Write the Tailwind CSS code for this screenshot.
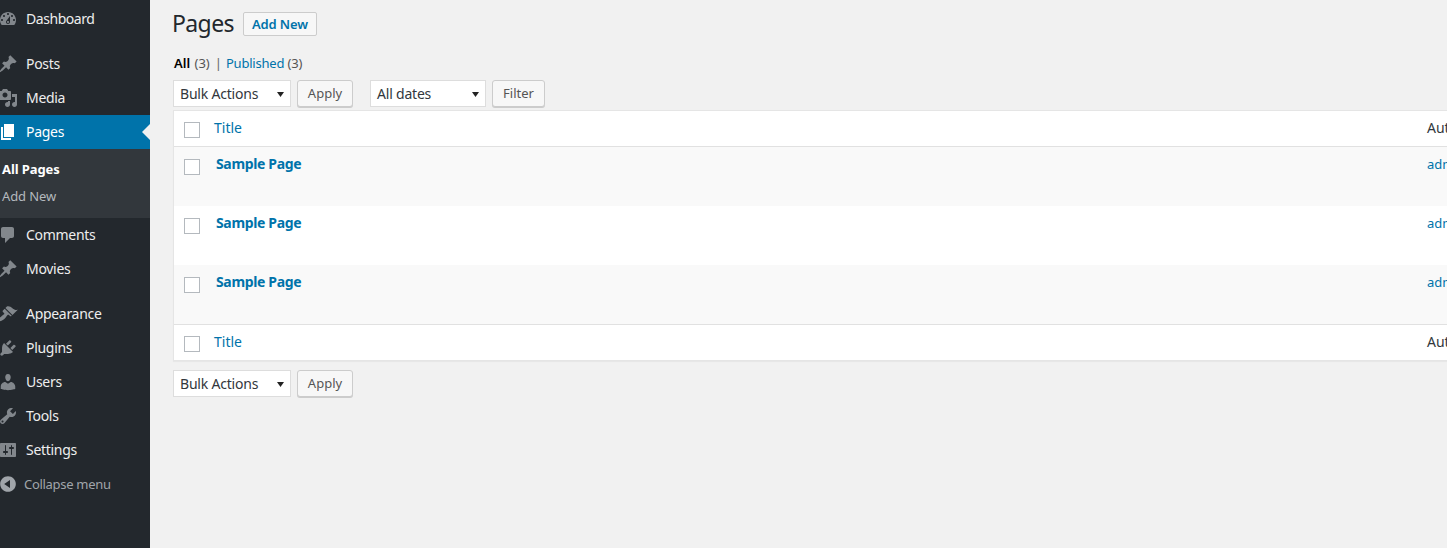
<!DOCTYPE html>
<html lang="en">
<head>
  <meta charset="UTF-8"/>
  <title>Pages</title>
  <script src="https://cdn.jsdelivr.net/npm/@tailwindcss/browser@4"></script>
</head>
<body class="h-[548px] w-[1447px] overflow-hidden bg-[#f1f1f1] font-['Noto_Sans',sans-serif] text-[14px] text-[#444]">
<div class="flex h-full">
  <!-- Admin menu -->
  <aside class="h-full w-[150px] shrink-0 bg-[#23282d] pt-[2px] tracking-[-0.3px] text-[#eee]">
    <a class="flex h-[34px] items-center gap-[8px]"><svg class="-ml-[2px] size-5 fill-[#82878c]" viewBox="0 0 20 20"><path d="M3.76 16h12.48c1.1-1.37 1.76-3.11 1.76-5 0-4.42-3.58-8-8-8s-8 3.58-8 8c0 1.89.66 3.63 1.76 5zM10 4c.55 0 1 .45 1 1s-.45 1-1 1-1-.45-1-1 .45-1 1-1zM6 6c.55 0 1 .45 1 1s-.45 1-1 1-1-.45-1-1 .45-1 1-1zm8 0c.55 0 1 .45 1 1s-.45 1-1 1-1-.45-1-1 .45-1 1-1zm-5.37 5.55L12 7v6c0 1.1-.9 2-2 2s-2-.9-2-2c0-.57.24-1.08.63-1.45zM4 10c.55 0 1 .45 1 1s-.45 1-1 1-1-.45-1-1 .45-1 1-1zm12 0c.55 0 1 .45 1 1s-.45 1-1 1-1-.45-1-1 .45-1 1-1zm-5 3c0-.55-.45-1-1-1s-1 .45-1 1 .45 1 1 1 1-.45 1-1z"/></svg><span class="-mt-[2px] tracking-[-0.45px]">Dashboard</span></a>
    <a class="mt-[11px] flex h-[34px] items-center gap-[8px]"><svg class="-ml-[2px] size-5 fill-[#82878c]" viewBox="0 0 20 20"><path d="M10.44 3.02l1.82-1.82 6.36 6.35-1.83 1.82c-1.05-.68-2.48-.57-3.41.36l-.75.75c-.92.93-1.04 2.35-.35 3.41l-1.83 1.82-2.41-2.41-2.8 2.79c-.42.42-3.38 2.71-3.8 2.29s1.86-3.39 2.28-3.81l2.79-2.79L4.1 9.36l1.83-1.82c1.05.69 2.48.57 3.4-.36l.75-.75c.93-.92 1.05-2.35.36-3.41z"/></svg><span class="-mt-[2px]">Posts</span></a>
    <a class="flex h-[34px] items-center gap-[8px]"><svg class="-ml-[2px] size-5 fill-[#82878c]" viewBox="0 0 20 20"><path d="M13 11V4c0-.55-.45-1-1-1h-1.67L9 1H5L3.67 3H2c-.55 0-1 .45-1 1v7c0 .55.45 1 1 1h10c.55 0 1-.45 1-1zM7 4.5c1.38 0 2.5 1.12 2.5 2.5S8.38 9.5 7 9.5 4.5 8.38 4.5 7 5.62 4.5 7 4.5zM14 6h5v10.5c0 1.38-1.12 2.5-2.5 2.5S14 17.88 14 16.5s1.12-2.5 2.5-2.5c.17 0 .34.02.5.05V9h-3V6zm-4 8.05V13h2v3.5c0 1.38-1.12 2.5-2.5 2.5S7 17.88 7 16.5 8.12 14 9.5 14c.17 0 .34.02.5.05z"/></svg><span class="-mt-[2px]">Media</span></a>
    <a class="relative flex h-[34px] items-center gap-[8px] bg-[#0073aa] text-white"><svg class="-ml-[2px] size-5 fill-white" viewBox="0 0 20 20"><path d="M6 15V2h10v13H6zm-1 1h8v2H3V5h2v11z"/></svg><span class="-mt-[2px]">Pages</span><span class="absolute right-0 top-[9px] border-y-[8px] border-r-[8px] border-y-transparent border-r-[#f1f1f1]"></span></a>
    <div class="h-[69px] bg-[#32373c] pt-[7px] text-[13px] tracking-[-0.1px]">
      <a class="flex h-[27px] items-center pl-[2px] font-bold text-white">All Pages</a>
      <a class="flex h-[27px] items-center pl-[2px] text-[#b4b9be]">Add New</a>
    </div>
    <a class="flex h-[34px] items-center gap-[8px]"><svg class="-ml-[2px] size-5 fill-[#82878c]" viewBox="0 0 20 20"><path d="M5 2h9c1.1 0 2 .9 2 2v7c0 1.1-.9 2-2 2h-2l-5 5v-5H5c-1.1 0-2-.9-2-2V4c0-1.1.9-2 2-2z"/></svg><span class="-mt-[2px]">Comments</span></a>
    <a class="flex h-[34px] items-center gap-[8px]"><svg class="-ml-[2px] size-5 fill-[#82878c]" viewBox="0 0 20 20"><path d="M10.44 3.02l1.82-1.82 6.36 6.35-1.83 1.82c-1.05-.68-2.48-.57-3.41.36l-.75.75c-.92.93-1.04 2.35-.35 3.41l-1.83 1.82-2.41-2.41-2.8 2.79c-.42.42-3.38 2.71-3.8 2.29s1.86-3.39 2.28-3.81l2.79-2.79L4.1 9.36l1.83-1.82c1.05.69 2.48.57 3.4-.36l.75-.75c.93-.92 1.05-2.35.36-3.41z"/></svg><span class="-mt-[2px]">Movies</span></a>
    <a class="mt-[11px] flex h-[34px] items-center gap-[8px]"><svg class="-ml-[2px] size-5 fill-[#82878c]" viewBox="0 0 20 20"><path d="M14.48 11.06L7.41 3.99l1.5-1.5c.5-.56 2.3-.47 3.51.32 1.21.8 1.43 1.28 2.91 2.1 1.18.64 2.45 1.26 4.45.85zm-.71.71L6.7 4.7 4.93 6.47c-.39.39-.39 1.02 0 1.41l1.06 1.06c.39.39.39 1.03 0 1.42-.6.6-1.43 1.11-2.21 1.69-.35.26-.7.53-1.01.84C1.43 13.23.91 14.8 1.7 17.28c2.44-.79 4-1.31 5.34-3.07.31-.31.58-.66.84-1.01.58-.78 1.09-1.61 1.69-2.21.39-.39 1.03-.39 1.42 0l1.06 1.06c.39.39 1.02.39 1.41 0z"/></svg><span class="-mt-[2px]">Appearance</span></a>
    <a class="flex h-[34px] items-center gap-[8px]"><svg class="-ml-[2px] size-5 fill-[#82878c]" viewBox="0 0 20 20"><path d="M13.11 4.36L9.87 7.6 8 5.73l3.24-3.24c.35-.34 1.05-.2 1.56.32.52.51.66 1.21.31 1.55zm-8 1.77l.91-1.12 9.01 9.01-1.19.84c-.71.71-2.63 1.16-3.82 1.16H6.14L4.9 17.26c-.59.59-1.54.59-2.12 0-.59-.58-.59-1.53 0-2.12l1.24-1.24v-3.88c0-1.13.4-3.19 1.09-3.89zm7.26 3.97l3.24-3.24c.34-.35 1.04-.21 1.55.31.52.51.66 1.21.31 1.55l-3.24 3.25z"/></svg><span class="-mt-[2px]">Plugins</span></a>
    <a class="flex h-[34px] items-center gap-[8px]"><svg class="-ml-[2px] size-5 fill-[#82878c]" viewBox="0 0 20 20"><path d="M10 9.25c-2.27 0-2.73-3.44-2.73-3.44C7 4.02 7.82 2 9.97 2c2.16 0 2.98 2.02 2.71 3.81 0 0-.41 3.44-2.68 3.44zm0 2.57L12.72 10c2.39 0 4.52 2.33 4.52 4.53v2.49s-3.65 1.13-7.24 1.13c-3.65 0-7.24-1.13-7.24-1.13v-2.49c0-2.25 1.94-4.48 4.47-4.48z"/></svg><span class="-mt-[2px]">Users</span></a>
    <a class="flex h-[34px] items-center gap-[8px]"><svg class="-ml-[2px] size-5 fill-[#82878c]" viewBox="0 0 20 20"><path d="M16.68 9.77c-1.34 1.34-3.3 1.67-4.95.99l-5.41 6.52c-.99.99-2.59.99-3.58 0s-.99-2.59 0-3.57l6.52-5.42c-.68-1.65-.35-3.61.99-4.95 1.28-1.28 3.12-1.62 4.72-1.06l-2.89 2.89 2.82 2.82 2.86-2.87c.53 1.58.18 3.39-1.08 4.65zM3.81 16.21c.4.39 1.04.39 1.43 0 .4-.4.4-1.04 0-1.43-.39-.4-1.03-.4-1.43 0-.39.39-.39 1.03 0 1.43z"/></svg><span class="-mt-[2px]">Tools</span></a>
    <a class="flex h-[34px] items-center gap-[8px]"><svg class="-ml-[2px] size-5 fill-[#82878c]" viewBox="0 0 20 20"><path d="M18 16V4c0-.55-.45-1-1-1H3c-.55 0-1 .45-1 1v12c0 .55.45 1 1 1h14c.55 0 1-.45 1-1zM8 11h1c.55 0 1 .45 1 1s-.45 1-1 1H8v1.5c0 .28-.22.5-.5.5s-.5-.22-.5-.5V13H6c-.55 0-1-.45-1-1s.45-1 1-1h1V5.5c0-.28.22-.5.5-.5s.5.22.5.5V11zm5-2h-1c-.55 0-1-.45-1-1s.45-1 1-1h1V5.5c0-.28.22-.5.5-.5s.5.22.5.5V7h1c.55 0 1 .45 1 1s-.45 1-1 1h-1v5.5c0 .28-.22.5-.5.5s-.5-.22-.5-.5V9z"/></svg><span class="-mt-[2px]">Settings</span></a>
    <a class="flex h-[34px] items-center gap-[6px] text-[13px] text-[#a0a5aa]"><svg class="-ml-[2px] size-5 fill-[#a0a5aa]" viewBox="0 0 20 20"><path d="M10 2.16c4.33 0 7.84 3.51 7.84 7.84s-3.51 7.84-7.84 7.84S2.16 14.33 2.16 10 5.71 2.16 10 2.16zm2 11.72V6.12L6.18 9.97z"/></svg><span class="mt-[2px]">Collapse menu</span></a>
  </aside>

  <!-- Content -->
  <main class="min-w-0 flex-1 overflow-hidden pl-[22px]">
    <div class="flex items-center gap-[9px] pt-[12px]">
      <h1 class="-mt-[2px] text-[23px] leading-[26px] tracking-[-0.6px] text-[#23282d]">Pages</h1>
      <a class="flex h-[24px] w-[74px] items-center justify-center rounded-[2px] border border-[#ccc] bg-[#f7f7f7] pt-[1px] text-[13px] font-semibold tracking-[-0.1px] text-[#0073aa]">Add New</a>
    </div>
    <ul class="mt-[18px] flex h-[20px] items-center text-[13px] text-[#555]">
      <li class="ml-[2px]"><span class="mr-[1px] font-semibold text-black">All</span> (3)<span class="ml-[5px] mr-[4px] text-[#666]">|</span></li>
      <li class="tracking-[-0.2px]"><a class="text-[#0073aa]">Published</a> (3)</li>
    </ul>
    <div class="ml-[1px] mt-[6px] flex h-[27px] items-stretch">
      <div class="flex w-[118px] items-center justify-between border border-[#ddd] bg-white pl-[6px] pr-[5px] tracking-[-0.2px] text-[#32373c]">Bulk Actions<svg class="size-[8px] fill-[#222]" viewBox="0 0 8 8"><path d="M0 2h7L3.5 7z"/></svg></div>
      <a class="ml-[6px] flex w-[56px] items-center justify-center rounded-[3px] border border-[#ccc] bg-[#f7f7f7] text-[13px] text-[#555] shadow-[0_1px_0_#ccc]">Apply</a>
      <div class="ml-[17px] flex w-[116px] items-center justify-between border border-[#ddd] bg-white pl-[6px] pr-[5px] tracking-[-0.2px] text-[#32373c]">All dates<svg class="size-[8px] fill-[#222]" viewBox="0 0 8 8"><path d="M0 2h7L3.5 7z"/></svg></div>
      <a class="ml-[6px] flex w-[53px] items-center justify-center rounded-[3px] border border-[#ccc] bg-[#f7f7f7] text-[13px] text-[#555] shadow-[0_1px_0_#ccc]">Filter</a>
    </div>

    <div class="ml-[1px] mt-[3px] w-[1400px] border border-[#e5e5e5] bg-white shadow-[0_1px_1px_rgba(0,0,0,0.04)]">
      <div class="flex h-[36px] border-b border-[#e1e1e1]">
        <div class="w-[40px] shrink-0 pl-[10px] pt-[11px]"><span class="block size-4 border border-[#b4b9be] bg-white"></span></div>
        <a class="w-[1213px] shrink-0 pt-[6px] text-[#0073aa]">Title</a>
        <span class="pt-[6px] text-[#32373c]">Author</span>
      </div>
      <div class="flex h-[59px] bg-[#f9f9f9]">
        <div class="w-[42px] shrink-0 pl-[10px] pt-[12px]"><span class="block size-4 border border-[#b4b9be] bg-white"></span></div>
        <a class="w-[1211px] shrink-0 pt-[6px] font-bold tracking-[-0.35px] text-[#0073aa]">Sample Page</a>
        <a class="pt-[8px] text-[13px] text-[#0073aa]">admin</a>
      </div>
      <div class="flex h-[59px]">
        <div class="w-[42px] shrink-0 pl-[10px] pt-[12px]"><span class="block size-4 border border-[#b4b9be] bg-white"></span></div>
        <a class="w-[1211px] shrink-0 pt-[6px] font-bold tracking-[-0.35px] text-[#0073aa]">Sample Page</a>
        <a class="pt-[8px] text-[13px] text-[#0073aa]">admin</a>
      </div>
      <div class="flex h-[59px] bg-[#f9f9f9]">
        <div class="w-[42px] shrink-0 pl-[10px] pt-[12px]"><span class="block size-4 border border-[#b4b9be] bg-white"></span></div>
        <a class="w-[1211px] shrink-0 pt-[6px] font-bold tracking-[-0.35px] text-[#0073aa]">Sample Page</a>
        <a class="pt-[8px] text-[13px] text-[#0073aa]">admin</a>
      </div>
      <div class="flex h-[36px] border-t border-[#e1e1e1]">
        <div class="w-[40px] shrink-0 pl-[10px] pt-[11px]"><span class="block size-4 border border-[#b4b9be] bg-white"></span></div>
        <a class="w-[1213px] shrink-0 pt-[6px] text-[#0073aa]">Title</a>
        <span class="pt-[6px] text-[#32373c]">Author</span>
      </div>
    </div>

    <div class="ml-[1px] mt-[9px] flex h-[27px] items-stretch">
      <div class="flex w-[118px] items-center justify-between border border-[#ddd] bg-white pl-[6px] pr-[5px] tracking-[-0.2px] text-[#32373c]">Bulk Actions<svg class="size-[8px] fill-[#222]" viewBox="0 0 8 8"><path d="M0 2h7L3.5 7z"/></svg></div>
      <a class="ml-[6px] flex w-[56px] items-center justify-center rounded-[3px] border border-[#ccc] bg-[#f7f7f7] text-[13px] text-[#555] shadow-[0_1px_0_#ccc]">Apply</a>
    </div>
  </main>
</div>
</body>
</html>
